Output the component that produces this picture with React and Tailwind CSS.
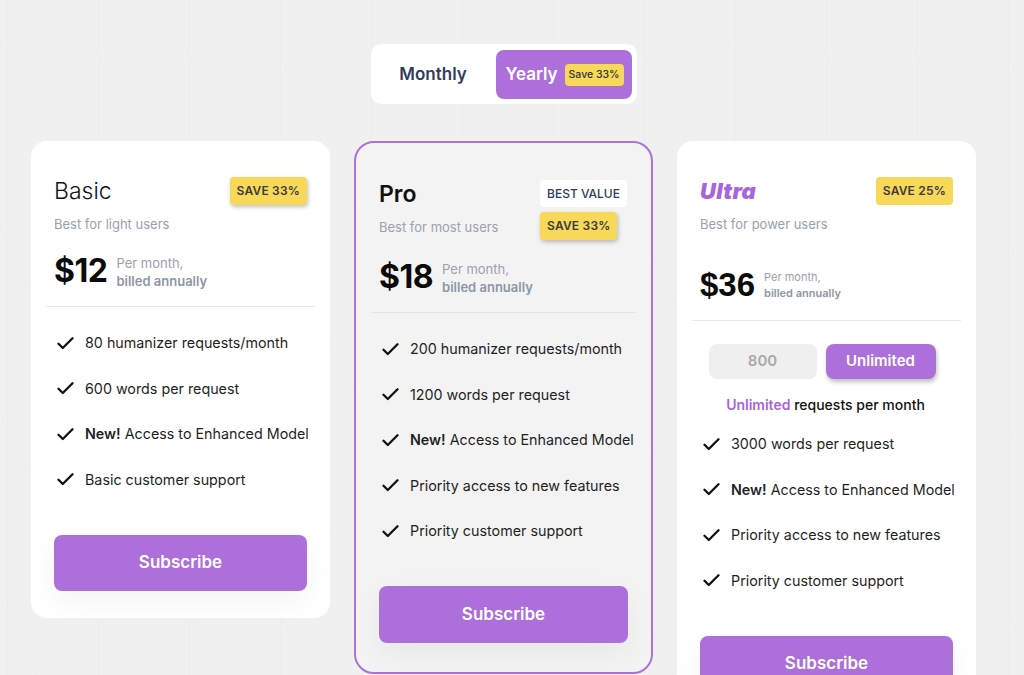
import React from "react";

const PURPLE = "bg-[#ad6fd9]";

function Check() {
  return (
    <svg width="17" height="13" viewBox="0 0 17 13" fill="none" className="shrink-0">
      <path d="M1.5 6.8 5.8 11 15.5 1.3" stroke="#111" strokeWidth="2.3" strokeLinecap="round" strokeLinejoin="round" />
    </svg>
  );
}

function Feature({ children }) {
  return (
    <li className="flex items-center gap-[11px] h-[20px] whitespace-nowrap text-[14.3px] text-[#1f1f1f] font-['Inter',sans-serif]">
      <Check />
      <span>{children}</span>
    </li>
  );
}

function Features({ items }) {
  return (
    <ul className="flex flex-col gap-[25.5px] pl-[3px]">
      {items.map((it, i) => (
        <Feature key={i}>{it}</Feature>
      ))}
    </ul>
  );
}

const NewModel = (
  <>
    <b className="font-semibold">New!</b> Access to Enhanced Model
  </>
);

function SaveBadge({ text, shadow = true }) {
  return (
    <div
      className={
        "h-[28px] px-[7px] flex items-center rounded-[4px] bg-[#f7d858] text-[12px] font-semibold tracking-[0.2px] text-[#3b3b3b] " +
        (shadow ? "shadow-[1px_2px_4px_rgba(0,0,0,0.25)]" : "")
      }
    >
      {text}
    </div>
  );
}

function Price({ amount }) {
  return (
    <div className="flex items-center gap-[9px] h-[40px]">
      <div className="text-[32px] font-bold text-[#0b0b0b] leading-none tracking-[-0.5px]">{amount}</div>
      <div className="flex flex-col text-[13px] leading-[18px] text-[#9aa1ae] mt-[1px]">
        <span>Per month,</span>
        <span className="font-semibold text-[#8e96a5]">billed annually</span>
      </div>
    </div>
  );
}

function Subscribe({ className = "" }) {
  return (
    <button
      className={
        "w-full h-[56px] rounded-[8px] " +
        PURPLE +
        " text-white text-[17px] font-semibold font-['Inter',sans-serif] shadow-[0_10px_30px_rgba(0,0,0,0.05)] " +
        className
      }
    >
      Subscribe
    </button>
  );
}

export default function App() {
  return (
    <div className="relative h-[675px] overflow-hidden bg-[#f0f0f0] font-['Inter',sans-serif]">
      <svg className="absolute inset-0 pointer-events-none" width="1024" height="675">
        <defs>
          <pattern id="bgp" x="7" y="0" width="91" height="186" patternUnits="userSpaceOnUse">
            <line x1="0.5" y1="0" x2="0.5" y2="186" stroke="#ececec" strokeWidth="1" />
            <line x1="64" y1="0" x2="155" y2="186" stroke="#ededed" strokeWidth="1" />
            <line x1="-27" y1="0" x2="64" y2="186" stroke="#ededed" strokeWidth="1" />
          </pattern>
        </defs>
        <rect width="1024" height="675" fill="url(#bgp)" />
      </svg>

      <div className="relative w-[1007px] flex flex-col items-center pt-[44px]">
        {/* Toggle */}
        <div className="flex items-center gap-[5px] p-[5px] pt-[6px] pb-[5px] bg-white rounded-[10px]">
          <div className="w-[115px] h-[49px] flex items-center justify-center text-[17px] font-semibold text-[#2f3c5c]">
            Monthly
          </div>
          <div className={"w-[136px] h-[49px] rounded-[8px] flex items-center gap-[7px] pl-[10px] " + PURPLE}>
            <span className="text-[17px] font-semibold text-white">Yearly</span>
            <span className="h-[22px] px-[4px] flex items-center rounded-[4px] bg-[#f7d858] text-[10.5px] font-medium text-[#333]">
              Save 33%
            </span>
          </div>
        </div>

        {/* Cards */}
        <div className="flex items-start gap-[24px] mt-[37px]">
          {/* Basic */}
          <div className="w-[299px] bg-white rounded-[16px] px-[23px] pt-[36px] pb-[27px]">
            <div className="flex justify-between items-start">
              <div className="text-[23px] leading-[28px] font-light text-[#111]">Basic</div>
              <SaveBadge text="SAVE 33%" />
            </div>
            <div className="mt-[10px] text-[13px] leading-[18px] text-[#9aa1ae]">Best for light users</div>
            <div className="mt-[18px]">
              <Price amount="$12" />
            </div>
            <div className="mt-[15px] -mx-[8px] h-px bg-[#e9e9e9]" />
            <div className="mt-[26px]">
              <Features
                items={["80 humanizer requests/month", "600 words per request", NewModel, "Basic customer support"]}
              />
            </div>
            <div className="mt-[45px]">
              <Subscribe />
            </div>
          </div>

          {/* Pro */}
          <div className="w-[299px] bg-[#f3f3f3] border-2 border-[#b06fdb] rounded-[20px] px-[23px] pt-[37px] pb-[29px]">
            <div className="flex justify-between items-start">
              <div className="flex flex-col">
                <div className="text-[23px] leading-[28px] font-semibold text-[#111]">Pro</div>
                <div className="mt-[10px] text-[13px] leading-[18px] text-[#9aa1ae]">Best for most users</div>
              </div>
              <div className="flex flex-col items-start gap-[5px] mr-[1px]">
                <div className="h-[27px] px-[7px] flex items-center rounded-[4px] bg-white text-[12px] font-medium tracking-[0px] text-[#2f3c5c]">
                  BEST VALUE
                </div>
                <SaveBadge text="SAVE 33%" />
              </div>
            </div>
            <div className="mt-[17px]">
              <Price amount="$18" />
            </div>
            <div className="mt-[15px] -mx-[8px] h-px bg-[#e3e3e3]" />
            <div className="mt-[26px]">
              <Features
                items={[
                  "200 humanizer requests/month",
                  "1200 words per request",
                  NewModel,
                  "Priority access to new features",
                  "Priority customer support",
                ]}
              />
            </div>
            <div className="mt-[45px]">
              <Subscribe className="h-[57px]" />
            </div>
          </div>

          {/* Ultra */}
          <div className="w-[299px] bg-white rounded-[16px] px-[23px] pt-[36px] pb-[27px]">
            <div className="flex justify-between items-start">
              <div className="text-[22px] leading-[28px] font-black italic text-[#a865dc] tracking-[0.3px]">Ultra</div>
              <SaveBadge text="SAVE 25%" shadow={false} />
            </div>
            <div className="mt-[10px] text-[13px] leading-[18px] text-[#9aa1ae]">Best for power users</div>
            <div className="mt-[31px] flex items-center gap-[9px] h-[40px]">
              <div className="text-[33px] font-bold text-[#0b0b0b] leading-none font-['Liberation_Sans',sans-serif]">$36</div>
              <div className="flex flex-col text-[11px] leading-[16px] text-[#9aa1ae] mt-[1px]">
                <span>Per month,</span>
                <span className="font-semibold text-[#8e96a5]">billed annually</span>
              </div>
            </div>
            <div className="mt-[16px] -mx-[8px] h-px bg-[#e9e9e9]" />
            <div className="mt-[23px] flex justify-center gap-[9px] pr-[9px]">
              <div className="w-[108px] h-[35px] rounded-[8px] bg-[#efefef] flex items-center justify-center text-[15px] font-semibold text-[#a9a9a9]">
                800
              </div>
              <div
                className={
                  "w-[110px] h-[35px] rounded-[8px] flex items-center justify-center text-[15px] font-semibold text-white shadow-[1px_3px_4px_rgba(0,0,0,0.25)] " +
                  PURPLE
                }
              >
                Unlimited
              </div>
            </div>
            <div className="mt-[15px] text-center text-[14px] font-medium text-[#111] pr-[2px]">
              <span className="text-[#a865dc] font-semibold">Unlimited</span> requests per month
            </div>
            <div className="mt-[19px]">
              <Features
                items={[
                  "3000 words per request",
                  NewModel,
                  "Priority access to new features",
                  "Priority customer support",
                ]}
              />
            </div>
            <div className="mt-[45px]">
              <Subscribe />
            </div>
          </div>
        </div>
      </div>
    </div>
  );
}
